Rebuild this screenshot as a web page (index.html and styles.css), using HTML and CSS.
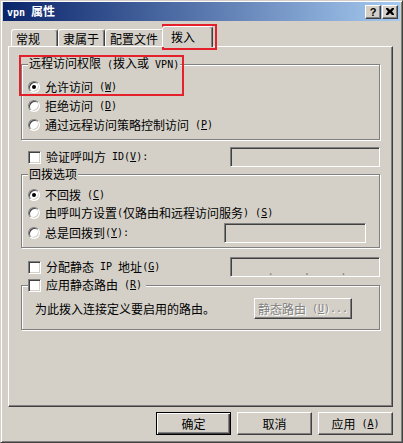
FILE: index.html
```html
<!DOCTYPE html>
<html>
<head>
  <meta charset="utf-8">
  <title>vpn 属性</title>
  <link rel="stylesheet" href="styles.css">
</head>
<body>
  <div class="window">
    <div class="titlebar">
      <span class="title"><span class="en">vpn </span>属性</span>
      <div class="title-buttons">
        <span class="tbtn help">?</span>
        <span class="tbtn">
          <svg width="8" height="7" viewBox="0 0 8 7">
            <path d="M0 0h2l2 2 2-2h2v1l-2 2.5 2 2.5v1h-2l-2-2-2 2h-2v-1l2-2.5-2-2.5z" fill="#000"/>
          </svg>
        </span>
      </div>
    </div>

    <div class="client">
      <!-- Property sheet tabs -->
      <div class="tabs">
        <div class="tab">常规</div>
        <div class="tab">隶属于</div>
        <div class="tab">配置文件</div>
        <div class="tab active">拨入</div>
      </div>

      <div class="panel">
        <fieldset class="group">
          <legend>远程访问权限<span class="en"> (</span>拨入或<span class="en"> VPN)</span></legend>
          <label class="row r1"><span class="radio checked"></span>允许访问<span class="en"> (<u>W</u>)</span></label>
          <label class="row r1"><span class="radio"></span>拒绝访问<span class="en"> (<u>D</u>)</span></label>
          <label class="row r2"><span class="radio"></span>通过远程访问策略控制访问<span class="en"> (<u>P</u>)</span></label>
        </fieldset>

        <div class="line first-line">
          <label class="row"><span class="check"></span>验证呼叫方<span class="en"> ID(<u>V</u>):</span></label>
          <span class="field"></span>
        </div>

        <fieldset class="group callback">
          <legend>回拨选项</legend>
          <label class="row r1"><span class="radio checked"></span>不回拨<span class="en"> (<u>C</u>)</span></label>
          <label class="row r3"><span class="radio"></span>由呼叫方设置<span class="en">(</span>仅路由和远程访问服务<span class="en">) (<u>S</u>)</span></label>
          <div class="line inner-line">
            <label class="row"><span class="radio"></span>总是回拨到<span class="en">(<u>Y</u>):</span></label>
            <span class="field short"></span>
          </div>
        </fieldset>

        <div class="line ip-line">
          <label class="row"><span class="check"></span>分配静态<span class="en"> IP </span>地址<span class="en">(<u>G</u>)</span></label>
          <span class="field ip"><i>.</i><i>.</i><i>.</i></span>
        </div>

        <fieldset class="group routes">
          <legend><label class="row"><span class="check"></span>应用静态路由<span class="en"> (<u>R</u>)</span></label></legend>
          <div class="route-line">
            <span class="route-text">为此拨入连接定义要启用的路由。</span>
            <span class="btn disabled">静态路由<span class="en"> (<u>U</u>)...</span></span>
          </div>
        </fieldset>
      </div>

      <div class="buttons">
        <span class="btn default">确定</span>
        <span class="btn">取消</span>
        <span class="btn">应用<span class="en"> (<u>A</u>)</span></span>
      </div>
    </div>

    <!-- red annotation boxes -->
    <div class="mark mark-tab"></div>
    <div class="mark mark-group"></div>
  </div>
</body>
</html>
```

FILE: styles.css
```css
body {
  margin: 0;
  background-color: #d4d0c8;
  font-family: "Noto Sans CJK SC", sans-serif;
  font-size: 12px;
  line-height: 14px;
  color: #000;
}

/* latin runs, 6px per letter like the bitmap font */
.en {
  font-family: "DejaVu Sans Mono", monospace;
  font-size: 10px;
  white-space: pre;
}

u {
  text-decoration: underline;
  text-underline-offset: 1px;
}

.window {
  position: relative;
  width: 403px;
  height: 443px;
  box-sizing: border-box;
  padding: 1px 2px 2px 2px;
  background-color: #d4d0c8;
  border: 1px solid;
  border-color: #d4d0c8 #404040 #404040 #d4d0c8;
  box-shadow: inset 1px 1px #fff, inset -1px -1px #808080;
}

/* Title bar */
.titlebar {
  height: 19px;
  display: flex;
  align-items: center;
  justify-content: space-between;
  padding: 0 2px 0 4px;
  background: linear-gradient(to right, #0a246a, #a6caf0);
  color: #fff;
  font-weight: bold;
}

.title-buttons {
  display: flex;
  gap: 1px;
}

.tbtn {
  width: 16px;
  height: 14px;
  box-sizing: border-box;
  display: flex;
  align-items: center;
  justify-content: center;
  background-color: #d4d0c8;
  border: 1px solid;
  border-color: #fff #404040 #404040 #fff;
  box-shadow: inset -1px -1px #808080;
  color: #000;
  font-family: "Liberation Sans", sans-serif;
  font-size: 11px;
  font-weight: bold;
}

/* Client area */
.client {
  padding: 5px 7px 0 5px;
}

.tabs {
  height: 20px;
  display: flex;
  align-items: flex-end;
  padding-left: 3px;
}

.tab {
  position: relative;
  height: 17px;
  box-sizing: border-box;
  min-width: 47px;
  padding: 2px 5px 0 4px;
  border-top: 1px solid #fff;
  border-left: 1px solid #fff;
  border-right: 1px solid #404040;
  border-radius: 3px 3px 0 0;
  box-shadow: inset -1px 0 #808080;
}

.tab.active {
  z-index: 2;
  height: 21px;
  min-width: 51px;
  margin: 0 -2px -1px -2px;
  padding: 3px 7px 0 8px;
  background-color: #d4d0c8;
}

.panel {
  height: 361px;
  box-sizing: border-box;
  padding: 9px 12px 0 12px;
  border: 1px solid;
  border-color: #fff #404040 #404040 #fff;
  box-shadow: inset -1px -1px #808080;
}

/* Group boxes */
.group {
  margin: 0;
  padding: 5px 6px 4px 6px;
  border: 1px solid #808080;
  box-shadow: inset 1px 1px #fff, 1px 1px #fff;
}

.group legend {
  padding: 0 1px;
  background-color: #d4d0c8;
}

.row {
  display: flex;
  align-items: center;
  white-space: nowrap;
}

.row .radio,
.row .check {
  margin-right: 5px;
}

.r1 { height: 19px; }
.r2 { height: 20px; }
.r3 { height: 18px; }

.radio {
  position: relative;
  flex: none;
  width: 12px;
  height: 12px;
  box-sizing: border-box;
  border-radius: 50%;
  border: 1px solid;
  border-color: #808080 #fff #fff #808080;
  box-shadow: inset 1px 1px #404040, inset -1px -1px #d4d0c8;
  background-color: #fff;
}

.radio.checked::after {
  content: "";
  position: absolute;
  left: 3px;
  top: 3px;
  width: 4px;
  height: 4px;
  border-radius: 50%;
  background-color: #000;
}

.check {
  flex: none;
  width: 13px;
  height: 13px;
  box-sizing: border-box;
  border: 1px solid;
  border-color: #808080 #fff #fff #808080;
  box-shadow: inset 1px 1px #404040, inset -1px -1px #d4d0c8;
  background-color: #fff;
}

.line {
  display: flex;
  justify-content: space-between;
  align-items: center;
}

.line .row {
  height: 14px;
  padding-left: 7px;
}

.first-line {
  margin-top: 7px;
}

.ip-line {
  margin-top: 9px;
}

.inner-line {
  height: 22px;
  padding-right: 7px;
}

.inner-line .row {
  padding-left: 0;
}

.field {
  width: 150px;
  height: 20px;
  box-sizing: border-box;
  border: 1px solid;
  border-color: #808080 #fff #fff #808080;
  box-shadow: inset 1px 1px #404040, inset -1px -1px #d4d0c8;
  background-color: #d4d0c8;
}

.field.short {
  width: 142px;
}

.field.ip {
  display: flex;
  align-items: flex-end;
  gap: 33px;
  padding-left: 38px;
  color: #808080;
  line-height: 13px;
}

.field.ip i {
  font-style: normal;
}

.callback {
  padding-top: 4px;
  padding-bottom: 3px;
}

.routes {
  margin-top: 1px;
  padding-top: 6px;
  padding-bottom: 10px;
}

.routes legend {
  padding: 0 4px 0 0;
}

.routes legend .row {
  height: 14px;
}

.route-line {
  display: flex;
  justify-content: space-between;
  align-items: center;
  padding: 0 21px 0 7px;
}

/* Push buttons */
.btn {
  width: 75px;
  height: 23px;
  box-sizing: border-box;
  display: flex;
  align-items: center;
  justify-content: center;
  background-color: #d4d0c8;
  border: 1px solid;
  border-color: #fff #404040 #404040 #fff;
  box-shadow: inset -1px -1px #808080;
  white-space: nowrap;
}

.btn.default {
  border-color: #000;
  box-shadow: inset 1px 1px #fff, inset -1px -1px #404040, inset -2px -2px #808080;
}

.btn.disabled {
  width: 98px;
  height: 21px;
  color: #808080;
  text-shadow: 1px 1px #fff;
}

.buttons {
  display: flex;
  justify-content: flex-end;
  gap: 6px;
  margin-top: 5px;
}

/* Red highlight boxes drawn over the dialog */
.mark {
  position: absolute;
  box-sizing: border-box;
  border: 2px solid #e4212b;
}

.mark-tab {
  left: 161px;
  top: 23px;
  width: 55px;
  height: 26px;
}

.mark-group {
  left: 18px;
  top: 54px;
  width: 165px;
  height: 41px;
}
```
